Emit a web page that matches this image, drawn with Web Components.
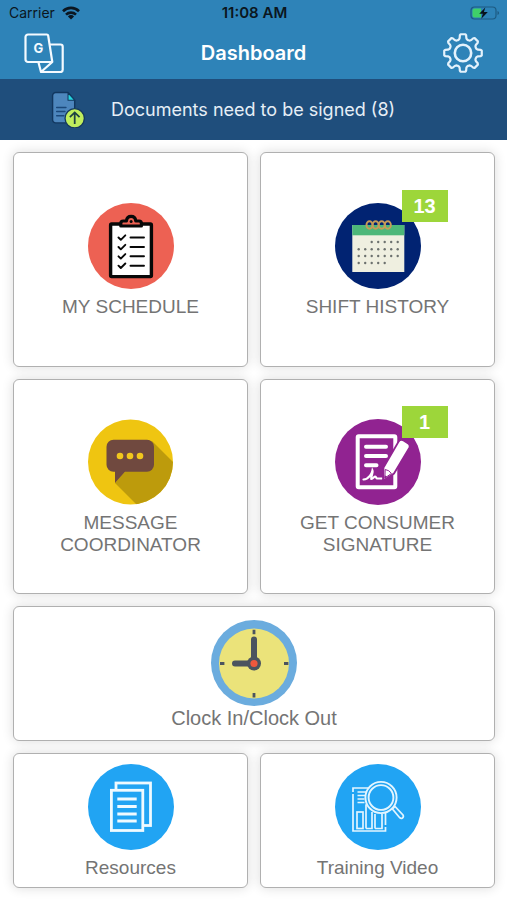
<!DOCTYPE html>
<html lang="en">
<head>
<meta charset="utf-8">
<meta name="viewport" content="width=device-width, initial-scale=1">
<title>Dashboard</title>
<style>
  html { background: #fff; }
  body { margin: 0; font-family: "Liberation Sans", Arial, sans-serif; color: #747474; }
</style>
</head>
<body>
<care-dashboard></care-dashboard>

<script>
const icons = {
  wifi: `<svg viewBox="0 0 18 14" fill="none" stroke="#0b1620" stroke-width="2.6"><path d="M1 5.2a11.4 11.4 0 0 1 16 0M4 8.6a7.2 7.2 0 0 1 10 0"/><path d="M9 13.4 5.9 10.4a4.4 4.4 0 0 1 6.2 0Z" fill="#0b1620" stroke="none"/></svg>`,
  battery: `<svg viewBox="0 0 30 14"><rect x="1" y="1" width="25" height="12" rx="3.5" fill="none" stroke="#1d5b82" stroke-width="1.2"/><path d="M4.500 2.500H11V11.500H4.500a2 2 0 0 1-2-2v-5a2 2 0 0 1 2-2Z" fill="#3fd069"/><path d="M27.500 5v4q1.600-.6 1.600-2t-1.600-2Z" fill="#1d5b82"/><path d="M15.300 1.500 9.200 7.800h3.600l-1.500 5 6.500-6.800h-3.900Z" fill="#07131c"/></svg>`,
  translate: `<svg viewBox="0 0 40 40" fill="none" stroke="#f4faff" stroke-width="2.200" stroke-linejoin="round"><path d="M4 1.500H22.800q1.200 0 1.400 1.200L28.300 29H4a2.500 2.500 0 0 1-2.500-2.500V4A2.500 2.500 0 0 1 4 1.500Z"/><path d="M26 11.500h10.500a2.200 2.200 0 0 1 2.200 2.200V36.800a2.200 2.200 0 0 1-2.200 2.200H17L14.500 29.500M28.300 29 17 39"/><text x="14.500" y="20" text-anchor="middle" font-family="Inter, sans-serif" font-size="13" font-weight="700" fill="#f4faff" stroke="none">G</text></svg>`,
  gear: `<svg viewBox="-20 -20 40 40" fill="none" stroke="#e4f2fc" stroke-width="2.200" stroke-linejoin="round"><path d="${gearPath()}"/><circle r="8.200" stroke-width="2.600"/></svg>`,
  upload: `<svg viewBox="0 0 34 36"><path d="M5.500 1.500H17.500L24 9V31H5.500a3 3 0 0 1-3-3V4.500a3 3 0 0 1 3-3Z" fill="#4d86bd" stroke="#12375f" stroke-width="1.400"/><path d="M17.500 1.800V9H24Z" fill="#24d5df" stroke="#12375f" stroke-linejoin="round"/><path d="M6.500 16h9M6.500 20h8M6.500 24h7" stroke="#1b487a" stroke-width="1.400" stroke-linecap="round"/><circle cx="24" cy="26.500" r="9.400" fill="#bfee5d" stroke="#16395c" stroke-width="1.300"/><path d="M24 32v-11M19.300 25.500 24 20.800l4.700 4.700" fill="none" stroke="#1d4142" stroke-width="1.700"/></svg>`,
  schedule: `<svg viewBox="0 0 86 86"><circle cx="43" cy="43" r="43" fill="#ed6153"/><rect x="22.600" y="21" width="40.800" height="52.600" rx="1" fill="#fff" stroke="#080808" stroke-width="3.400"/><path d="M32.800 23v-2.600q0-2.400 2.400-2.400h3.200q.6-4.600 4.700-4.600t4.700 4.600h3.200q2.400 0 2.400 2.400V23Z" fill="#ed6153" stroke="#080808" stroke-width="3.200" stroke-linejoin="round"/><circle cx="43.100" cy="18.500" r="1.500" fill="#080808"/><g fill="none" stroke="#080808" stroke-width="1.900" stroke-linecap="round" stroke-linejoin="round"><path d="m30.500 34.500 2.300 2.300 4.500-4.500M30.500 44l2.300 2.300 4.500-4.500M30.500 53.300l2.300 2.300 4.500-4.500M30.500 62.700l2.300 2.300 4.500-4.500"/><path d="M42.500 34.500h13.500M42.500 44h13.500M42.500 53.300h13.500M42.500 62.700h13.500"/></g></svg>`,
  calendar: `<svg viewBox="0 0 86 86"><circle cx="43" cy="43" r="43" fill="#012372"/><rect x="17.300" y="22" width="52" height="47" fill="#efefe0"/><rect x="17.300" y="22" width="52" height="10.300" fill="#4db779"/><g fill="none" stroke="#c79b57" stroke-width="2">${[34.5, 40.6, 46.7, 52.8].map(x => `<ellipse cx="${x}" cy="22" rx="3" ry="3.800"/>`).join('')}</g><g fill="#6c716e">${dots()}</g></svg>`,
  message: `<svg viewBox="0 0 86 86"><defs><clipPath id="disc"><circle cx="42.500" cy="43" r="42.500"/></clipPath></defs><g clip-path="url(#disc)"><rect width="86" height="86" fill="#efc511"/><path d="M64 22 90 48V90H53L27 64Z" fill="#bd9b0c"/></g><path d="M25.500 20.700h33.500a7 7 0 0 1 7 7v18a7 7 0 0 1-7 7H37L27 64V52.700h-1.500a7 7 0 0 1-7-7v-18a7 7 0 0 1 7-7Z" fill="#70493f"/><g fill="#f1c71d"><circle cx="32" cy="37" r="3.300"/><circle cx="42" cy="37" r="3.300"/><circle cx="52" cy="37" r="3.300"/></g></svg>`,
  signature: `<svg viewBox="0 0 86 86"><circle cx="43" cy="43" r="43" fill="#912391"/><rect x="22.700" y="17.300" width="37.600" height="51" rx="1" fill="none" stroke="#fff" stroke-width="4"/><path d="M31 27.700h20M31 37h20M31 46.300h10.500" stroke="#fff" stroke-width="4" stroke-linecap="round"/><path d="M28.500 60.500C34 60.500 37 54 37.500 51.500c1 2-2 7-1.200 8.500 2 0 2.500-2.500 4-2.500 1 0 .5 2 2 2H47" fill="none" stroke="#fff" stroke-width="2.200" stroke-linecap="round"/><path d="M63.500 22.800q2-3 5-1.200l4.300 2.700q3 2 1.300 5L59 54.500 48 61.800 48.500 48.500Z" fill="#fff" stroke="#912391" stroke-width="1.800"/><path d="M50.200 50.500q4 .5 6.200 4l-6.600 4.600Z" fill="#fff" stroke="#912391" stroke-width="1"/><path d="m49.800 56.200 2.500 1.600-3 2.200Z" fill="#912391"/></svg>`,
  clock: `<svg viewBox="0 0 86 86"><circle cx="43" cy="43" r="43" fill="#6bacde"/><circle cx="43" cy="43.500" r="35" fill="#ebe37a"/><g stroke="#4b545f"><path d="M43 9.800v4.400M43 73v4.400M9 43.500h4.400M73 43.500h4.400" stroke-width="2.800"/><path d="M43 19.500v24M24 43.500h19" stroke-width="6" stroke-linecap="round"/></g><circle cx="43" cy="43.500" r="7" fill="#4b545f"/><circle cx="43" cy="43.500" r="3.600" fill="#ef583d"/></svg>`,
  resources: `<svg viewBox="0 0 86 86"><circle cx="43" cy="43" r="43" fill="#21a4f3"/><g stroke="#effaff" stroke-width="2.800"><rect x="28" y="19" width="34.500" height="42.500" fill="none"/><rect x="23.400" y="26.300" width="31.400" height="40.200" fill="#21a4f3"/><path d="M29.300 35h19.400M29.300 42.500h19.400M29.300 50h19.400M29.300 57h19.400"/></g></svg>`,
  training: `<svg viewBox="0 0 86 86"><circle cx="43" cy="43" r="43" fill="#21a4f3"/><g fill="none" stroke="#e2f5ff" stroke-width="1.700"><path d="M35 24H18v4M18 30v37H50.500v-4M50.500 61V48"/><path d="M22.500 28h10M22.500 31.500h8M22.500 35h7M22.500 38.500h7"/><rect x="22" y="48" width="6" height="16.500"/><path d="M31 64.500V41h5M37 48v16.500h-6M40 64.500V50M47 50v14.500h-7"/><path d="m57.500 45 2.500-2.500 8 8.500q1 1.800-.5 3-1.500 1-2.800-.3Z" fill="#21a4f3"/><circle cx="46" cy="33.500" r="15.600" fill="#21a4f3" stroke-width="1.900"/><circle cx="46" cy="33.500" r="12.400" stroke-width="1.900"/></g></svg>`
};

// Eight-toothed cog outline centred on the origin.
function gearPath() {
  const profile = [[-22.5, 13.8], [-16, 14.2], [-12.5, 15.4], [-10, 18], [-7, 18.9], [7, 18.9], [10, 18], [12.5, 15.4], [16, 14.2]];
  const points = [];
  for (let tooth = 0; tooth < 8; tooth++) {
    for (const [angle, radius] of profile) {
      const t = (tooth * 45 + angle) * Math.PI / 180;
      points.push(`${(radius * Math.sin(t)).toFixed(2)} ${(-radius * Math.cos(t)).toFixed(2)}`);
    }
  }
  return `M${points.join('L')}Z`;
}

// Day marks of the calendar: the first row starts late, the last one ends early.
function dots() {
  let out = '';
  [[39, 2, 6], [46.3, 0, 6], [53, 0, 6], [60, 0, 4]].forEach(([y, from, to]) => {
    for (let i = from; i <= to; i++) out += `<circle cx="${23.7 + i * 6.5}" cy="${y}" r="1.200"/>`;
  });
  return out;
}

function define(name, render) {
  customElements.define(name, class extends HTMLElement {
    connectedCallback() {
      if (this.shadowRoot) return;
      this.attachShadow({ mode: 'open' }).innerHTML = render(this);
    }
  });
}

define('app-icon', el => `
  <style>
    :host { display: block; flex: none; }
    svg { display: block; width: 100%; height: auto; }
  </style>
  ${icons[el.getAttribute('name')].replace('<svg', '<svg aria-hidden="true"')}`);

define('status-bar', () => `
  <style>
    :host { display: grid; grid-template-columns: 1fr auto 1fr; align-items: center; height: 26px; padding: 0 7px 0 9px; font: 14px/26px Inter, sans-serif; color: #0b1620; }
    .left { display: flex; align-items: center; gap: 7px; }
    .wifi { width: 18px; }
    .battery { width: 30px; justify-self: end; }
    time { font-size: 15px; font-weight: 600; }
  </style>
  <div class="left"><span>Carrier</span><app-icon class="wifi" name="wifi"></app-icon></div>
  <time>11:08 AM</time>
  <app-icon class="battery" name="battery"></app-icon>`);

define('nav-bar', () => `
  <style>
    :host { display: grid; grid-template-columns: 1fr auto 1fr; align-items: center; height: 53px; padding: 0 24px; }
    h1 { margin: 0; font: 600 20px/24px Inter, sans-serif; color: #fff; }
    button { width: 40px; padding: 0; border: 0; background: none; cursor: pointer; }
    button:last-child { justify-self: end; }
  </style>
  <button aria-label="Change language"><app-icon name="translate"></app-icon></button>
  <h1><slot></slot></h1>
  <button aria-label="Settings"><app-icon name="gear"></app-icon></button>`);

define('notice-bar', () => `
  <style>
    :host { display: block; background: #1f4e7c; }
    a { display: flex; align-items: center; gap: 26px; min-height: 61px; padding: 0 50px; box-sizing: border-box; font: 18px/24px Inter, sans-serif; color: #e6eef6; text-decoration: none; }
    app-icon { width: 35px; }
  </style>
  <a href="#documents"><app-icon name="upload"></app-icon><span><slot></slot></span></a>`);

define('dash-tile', el => `
  <style>
    :host { display: grid; }
    button { display: flex; flex-direction: column; align-items: center; justify-content: center; gap: var(--tile-gap, 7px); padding: 2px 24px 0; border: 1px solid #b0b0b0; border-radius: 6px; background: #fff; box-shadow: 0 0 12px rgba(0, 0, 0, .14); font: var(--tile-size, 19px)/22px "Liberation Sans", Arial, sans-serif; color: inherit; cursor: pointer; }
    .art { position: relative; width: 86px; }
  </style>
  <button>
    <span class="art"><app-icon name="${el.getAttribute('icon')}"></app-icon><slot name="badge"></slot></span>
    <span><slot></slot></span>
  </button>`);

define('count-badge', () => `
  <style>
    :host { position: absolute; top: -13px; left: 67px; width: 46px; background: #9dd63a; font: bold 20px/32px "Liberation Sans", Arial, sans-serif; text-align: center; color: #fff; }
  </style>
  <slot></slot>`);

define('care-dashboard', () => `
  <style>
    :host { display: block; }
    header { background: #2e83b8; }
    main { display: grid; grid-template-columns: 1fr 1fr; grid-template-rows: 215px 215px 135px 135px; gap: 12px; padding: 12px 12px 12px 13px; }
    .wide { grid-column: 1 / -1; --tile-gap: 1px; --tile-size: 20px; }
  </style>
  <header>
    <status-bar></status-bar>
    <nav-bar>Dashboard</nav-bar>
  </header>
  <notice-bar>Documents need to be signed (8)</notice-bar>
  <main>
    <dash-tile icon="schedule">MY SCHEDULE</dash-tile>
    <dash-tile icon="calendar">SHIFT HISTORY<count-badge slot="badge">13</count-badge></dash-tile>
    <dash-tile icon="message">MESSAGE<br>COORDINATOR</dash-tile>
    <dash-tile icon="signature">GET CONSUMER<br>SIGNATURE<count-badge slot="badge">1</count-badge></dash-tile>
    <dash-tile class="wide" icon="clock">Clock In/Clock Out</dash-tile>
    <dash-tile icon="resources">Resources</dash-tile>
    <dash-tile icon="training">Training Video</dash-tile>
  </main>`);
</script>
</body>
</html>
